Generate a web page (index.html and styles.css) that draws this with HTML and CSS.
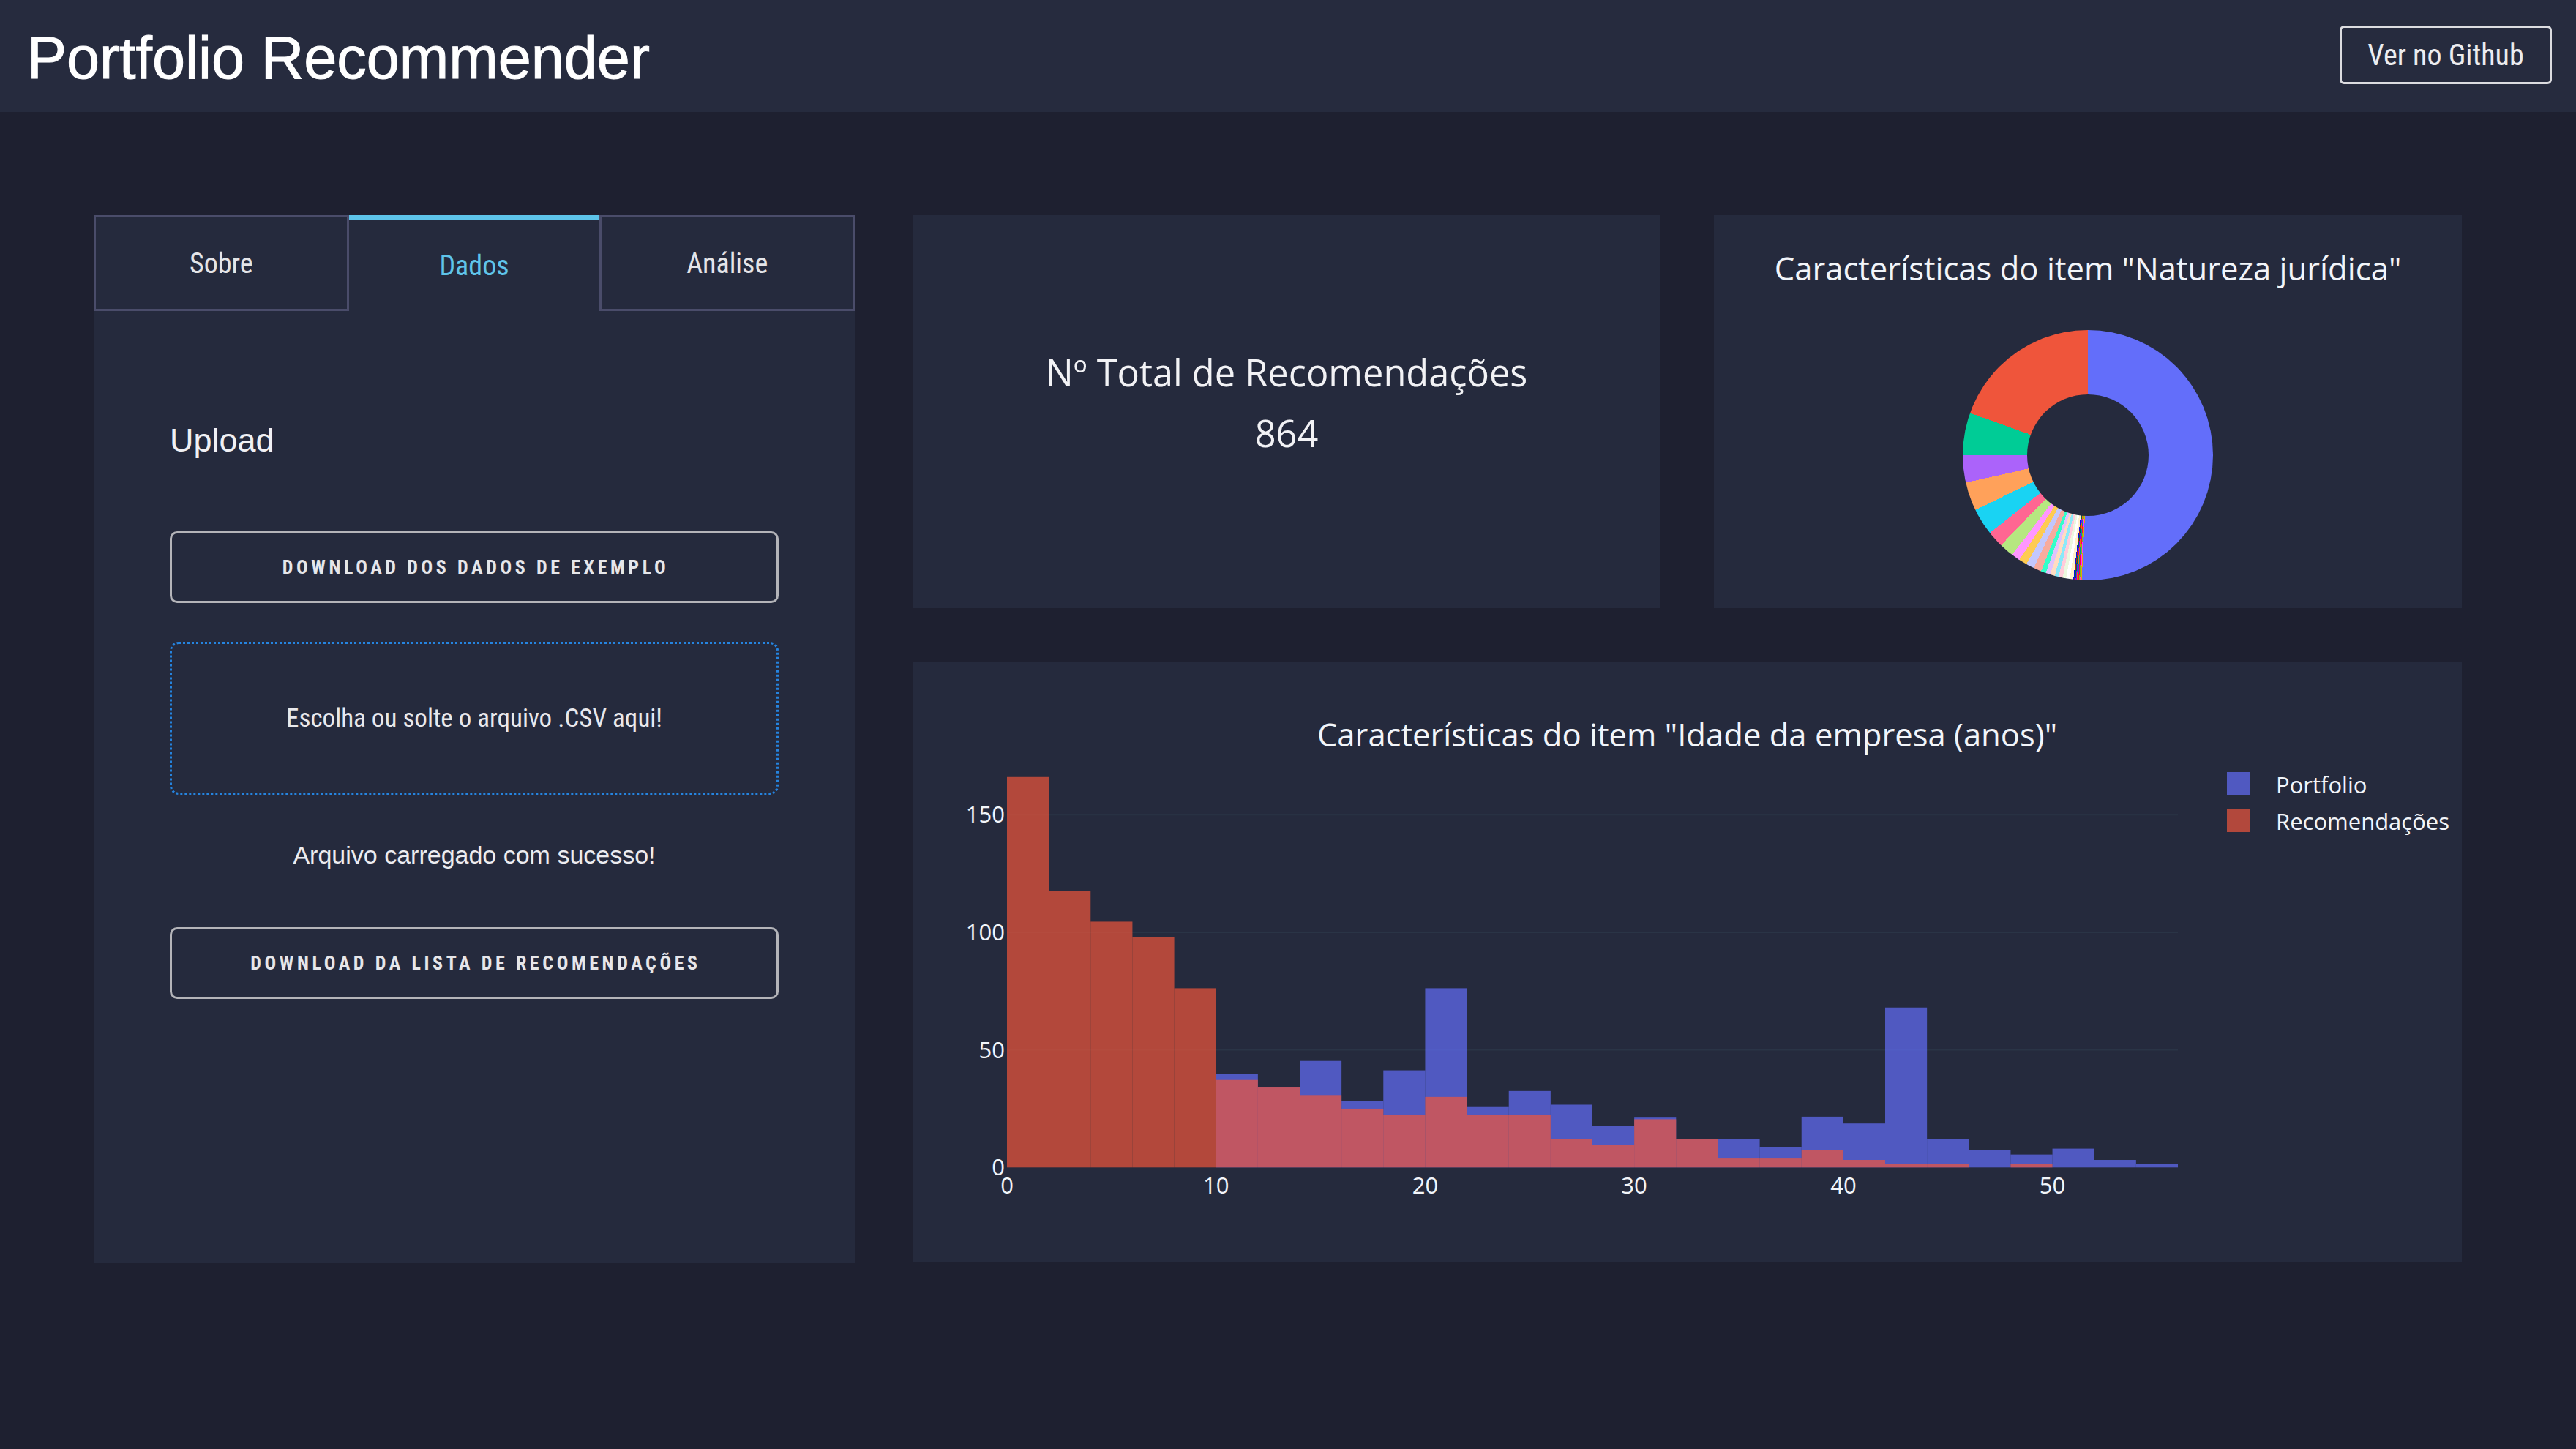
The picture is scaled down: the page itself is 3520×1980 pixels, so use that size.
FILE: index.html
```html
<!DOCTYPE html>
<html lang="pt">
<head>
<meta charset="utf-8">
<title>Portfolio Recommender</title>
<link rel="stylesheet" href="styles.css">
</head>
<body>
<header class="topbar">
  <h1 class="brand">Portfolio Recommender</h1>
  <a class="gh-btn">Ver no Github</a>
</header>
<main class="layout">
  <aside class="panel">
    <nav class="tabs">
      <div class="tab">Sobre</div>
      <div class="tab tab-active">Dados</div>
      <div class="tab">Análise</div>
    </nav>
    <section class="panel-body">
      <h2 class="upload-title">Upload</h2>
      <button class="outline-btn btn-first">Download dos dados de exemplo</button>
      <div class="dropzone">Escolha ou solte o arquivo .CSV aqui!</div>
      <p class="status">Arquivo carregado com sucesso!</p>
      <button class="outline-btn btn-second">Download da lista de recomendações</button>
    </section>
  </aside>
  <section class="dash">
    <div class="card stat-card">
      <div class="stat-line">Nº Total de Recomendações</div>
      <div class="stat-line">864</div>
    </div>
    <div class="card pie-card">
      <h3 class="chart-title">Características do item "Natureza jurídica"</h3>
      <div class="donut"><div class="donut-hole"></div></div>
    </div>
    <div class="card hist-card">
      <svg class="hist" viewBox="0 0 2117 821" width="2117" height="821">
        <text class="hist-title" x="1058.5" y="115.5" text-anchor="middle">Características do item "Idade da empresa (anos)"</text>
        <g class="grid">
          <line x1="129" y1="530.6" x2="1729" y2="530.6"/>
          <line x1="129" y1="369.9" x2="1729" y2="369.9"/>
          <line x1="129" y1="209.2" x2="1729" y2="209.2"/>
        </g>
        <g transform="translate(129 691.3) scale(28.5714 -3.214)">
          <g class="bars-blue">
            <rect x="10" y="0" width="2" height="39.8"/>
            <rect x="12" y="0" width="2" height="34"/>
            <rect x="14" y="0" width="2" height="45.3"/>
            <rect x="16" y="0" width="2" height="28.3"/>
            <rect x="18" y="0" width="2" height="41.3"/>
            <rect x="20" y="0" width="2" height="76.2"/>
            <rect x="22" y="0" width="2" height="26"/>
            <rect x="24" y="0" width="2" height="32.5"/>
            <rect x="26" y="0" width="2" height="26.7"/>
            <rect x="28" y="0" width="2" height="17.8"/>
            <rect x="30" y="0" width="2" height="21.2"/>
            <rect x="32" y="0" width="2" height="12.2"/>
            <rect x="34" y="0" width="2" height="12.2"/>
            <rect x="36" y="0" width="2" height="8.8"/>
            <rect x="38" y="0" width="2" height="21.6"/>
            <rect x="40" y="0" width="2" height="18.7"/>
            <rect x="42" y="0" width="2" height="68"/>
            <rect x="44" y="0" width="2" height="12.2"/>
            <rect x="46" y="0" width="2" height="7.3"/>
            <rect x="48" y="0" width="2" height="5.5"/>
            <rect x="50" y="0" width="2" height="8"/>
            <rect x="52" y="0" width="2" height="3.2"/>
            <rect x="54" y="0" width="2" height="1.5"/>
          </g>
          <g class="bars-red">
            <rect x="0" y="0" width="2" height="166"/>
            <rect x="2" y="0" width="2" height="117.5"/>
            <rect x="4" y="0" width="2" height="104.5"/>
            <rect x="6" y="0" width="2" height="98"/>
            <rect x="8" y="0" width="2" height="76.2"/>
            <rect x="10" y="0" width="2" height="37.2"/>
            <rect x="12" y="0" width="2" height="34"/>
            <rect x="14" y="0" width="2" height="30.8"/>
            <rect x="16" y="0" width="2" height="25"/>
            <rect x="18" y="0" width="2" height="22.5"/>
            <rect x="20" y="0" width="2" height="30"/>
            <rect x="22" y="0" width="2" height="22.5"/>
            <rect x="24" y="0" width="2" height="22.5"/>
            <rect x="26" y="0" width="2" height="12.2"/>
            <rect x="28" y="0" width="2" height="9.7"/>
            <rect x="30" y="0" width="2" height="20.5"/>
            <rect x="32" y="0" width="2" height="12.2"/>
            <rect x="34" y="0" width="2" height="3.8"/>
            <rect x="36" y="0" width="2" height="3.8"/>
            <rect x="38" y="0" width="2" height="7.3"/>
            <rect x="40" y="0" width="2" height="3.2"/>
            <rect x="42" y="0" width="2" height="1.5"/>
            <rect x="44" y="0" width="2" height="1.5"/>
            <rect x="48" y="0" width="2" height="1.5"/>
          </g>
        </g>
        <g class="ticks" text-anchor="end">
          <text x="126" y="702.3">0</text>
          <text x="126" y="541.6">50</text>
          <text x="126" y="380.9">100</text>
          <text x="126" y="220.2">150</text>
        </g>
        <g class="ticks" text-anchor="middle">
          <text x="129" y="727">0</text>
          <text x="414.7" y="727">10</text>
          <text x="700.4" y="727">20</text>
          <text x="986.1" y="727">30</text>
          <text x="1271.9" y="727">40</text>
          <text x="1557.6" y="727">50</text>
        </g>
        <g class="legend">
          <rect class="leg-blue" x="1796" y="151" width="31" height="32"/>
          <rect class="leg-red" x="1796" y="201" width="31" height="32"/>
          <text x="1863" y="179.8">Portfolio</text>
          <text x="1863" y="229.8">Recomendações</text>
        </g>
      </svg>
    </div>
  </section>
</main>
</body>
</html>
```
FILE: styles.css
```css
html, body {
  margin: 0;
  padding: 0;
}
body {
  width: 3520px;
  height: 1980px;
  overflow: hidden;
  background: #1e2030;
  color: #e8e8ec;
  font-family: "Liberation Sans", Arial, sans-serif;
}

/* header */
.topbar {
  height: 153px;
  box-sizing: border-box;
  background: #262b3e;
  display: flex;
  align-items: center;
  justify-content: space-between;
  padding: 0 33px 0 37px;
}
.brand {
  margin: 0;
  padding-top: 4px;
  font-family: "Liberation Sans", Arial, sans-serif;
  font-size: 81px;
  font-weight: 400;
  line-height: 92px;
  color: #ffffff;
  -webkit-text-stroke: 1px #ffffff;
}
.gh-btn {
  width: 290px;
  height: 80px;
  box-sizing: border-box;
  margin-bottom: 3px;
  border: 3px solid #dcdce0;
  border-radius: 6px;
  display: flex;
  align-items: center;
  justify-content: center;
  font-family: "Liberation Sans Narrow", "Roboto Condensed", "Liberation Sans", sans-serif;
  font-size: 40px;
  color: #ececef;
}

/* layout */
.layout {
  display: flex;
  gap: 79px;
  padding: 141px 156px 0 128px;
}
.panel {
  flex: none;
  width: 1040px;
  height: 1432px;
  background: #252a3d;
}
.tabs {
  display: flex;
  height: 131px;
}
.tab {
  flex: 1;
  box-sizing: border-box;
  border: 3px solid #4a4c6a;
  display: flex;
  align-items: center;
  justify-content: center;
  font-family: "Liberation Sans Narrow", "Roboto Condensed", "Liberation Sans", sans-serif;
  font-size: 38px;
  color: #e4e4e8;
}
.tab-active {
  border: 0;
  border-top: 6px solid #5dc3e9;
  color: #5fc4ea;
}
.panel-body {
  padding: 151px 104px 0;
}
.upload-title {
  margin: 0;
  font-size: 45px;
  font-weight: 400;
  line-height: 52px;
  color: #f0f0f4;
}
.outline-btn {
  display: flex;
  align-items: center;
  justify-content: center;
  width: 100%;
  height: 98px;
  box-sizing: border-box;
  padding: 0 0 0 4px;
  border: 3px solid #b4b4b9;
  border-radius: 10px;
  background: transparent;
  color: #e6e6ea;
  font-family: "Liberation Sans Narrow", "Roboto Condensed", "Liberation Sans", sans-serif;
  font-weight: 700;
  font-size: 26px;
  letter-spacing: 4.6px;
  text-transform: uppercase;
}
.btn-first {
  margin-top: 98px;
}
.btn-second {
  margin-top: 79px;
}
.dropzone {
  margin-top: 53px;
  height: 209px;
  box-sizing: border-box;
  border: 3px dotted #2584e0;
  border-radius: 12px;
  display: flex;
  align-items: center;
  justify-content: center;
  font-family: "Liberation Sans Narrow", "Roboto Condensed", "Liberation Sans", sans-serif;
  font-size: 35px;
  color: #e8e8ec;
}
.status {
  margin: 63px 0 0;
  text-align: center;
  font-size: 34px;
  line-height: 39px;
  color: #ececf0;
}

/* dashboard cards */
.dash {
  flex: 1;
  display: grid;
  grid-template-columns: 1fr 1fr;
  grid-template-rows: 537px 821px;
  gap: 73px;
}
.card {
  background: #252a3d;
  box-sizing: border-box;
}
.stat-card {
  padding-top: 173px;
  text-align: center;
  font-family: "Open Sans", sans-serif;
  font-weight: 400;
  font-size: 50.5px;
  line-height: 83px;
  color: #f2f2f5;
}
.pie-card {
  padding-top: 42px;
  display: flex;
  flex-direction: column;
  align-items: center;
}
.chart-title {
  margin: 0;
  font-family: "Open Sans", sans-serif;
  font-size: 43.6px;
  font-weight: 400;
  line-height: 60px;
  color: #f2f5fa;
}
.donut {
  margin-top: 55px;
  width: 342px;
  height: 342px;
  border-radius: 50%;
  display: flex;
  align-items: center;
  justify-content: center;
  background: conic-gradient(
    #636efa 0deg 182.8deg,
    #eaa602 182.8deg 183.2deg,
    #ff33ff 183.2deg 183.6deg,
    #74c41e 183.6deg 184deg,
    #ff0048 184deg 184.4deg,
    #0a8aa0 184.4deg 184.8deg,
    #f56a00 184.8deg 185.2deg,
    #7a06f5 185.2deg 185.6deg,
    #006649 185.6deg 186deg,
    #b02710 186deg 186.3deg,
    #0614e0 186.3deg 186.7deg,
    #fff0cc 186.7deg 188.3deg,
    #ffffff 188.3deg 190deg,
    #ecf8df 190deg 191.7deg,
    #ffccdb 191.7deg 193.5deg,
    #8be9f9 193.5deg 195.4deg,
    #ffdcc1 195.4deg 197.5deg,
    #e0c3fd 197.5deg 199.7deg,
    #33ffc9 199.7deg 202deg,
    #f7ab9e 202deg 205.7deg,
    #c3c7fd 205.7deg 209.4deg,
    #fecb52 209.4deg 213.2deg,
    #ff97ff 213.2deg 217.2deg,
    #b6e880 217.2deg 224deg,
    #ff6692 224deg 231.6deg,
    #19d3f3 231.6deg 244deg,
    #ffa15a 244deg 257.3deg,
    #ab63fa 257.3deg 270deg,
    #00cc96 270deg 289.7deg,
    #ef553b 289.7deg 360deg
  );
}
.donut-hole {
  width: 166px;
  height: 166px;
  border-radius: 50%;
  background: #252a3d;
}
.hist-card {
  grid-column: 1 / 3;
}
.hist {
  display: block;
  width: 100%;
  height: 821px;
}
.hist-title {
  font-family: "Open Sans", sans-serif;
  font-size: 43.6px;
  fill: #f2f5fa;
}
.grid line {
  stroke: #2a3446;
  stroke-width: 2;
}
.bars-blue rect {
  fill: #636efa;
  opacity: 0.7;
}
.bars-red rect {
  fill: #ef553b;
  opacity: 0.7;
}
.ticks text,
.legend text {
  font-family: "Open Sans", sans-serif;
  font-size: 31px;
  fill: #f2f5fa;
}
.leg-blue {
  fill: #5059c1;
}
.leg-red {
  fill: #b2483c;
}
```
